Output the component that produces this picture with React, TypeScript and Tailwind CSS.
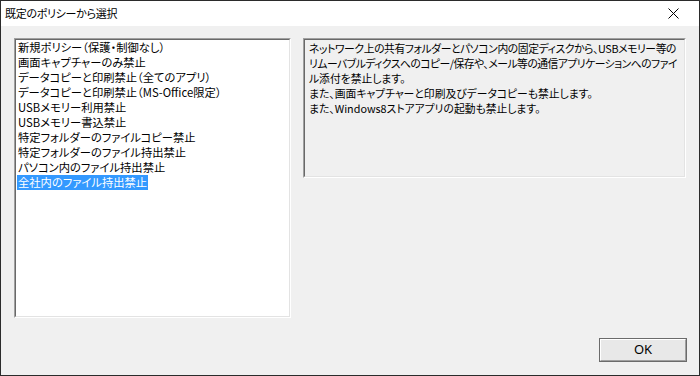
import React from "react";

const items = [
  "新規ポリシー（保護・制御なし）",
  "画面キャプチャーのみ禁止",
  "データコピーと印刷禁止（全てのアプリ）",
  "データコピーと印刷禁止（MS-Office限定）",
  "USBメモリー利用禁止",
  "USBメモリー書込禁止",
  "特定フォルダーのファイルコピー禁止",
  "特定フォルダーのファイル持出禁止",
  "パソコン内のファイル持出禁止",
  "全社内のファイル持出禁止",
];

const desc = [
  { t: "ネットワーク上の共有フォルダーとパソコン内の固定ディスクから、USBメモリー等の", c: "tracking-[-0.4px]" },
  { t: "リムーバブルディクスへのコピー/保存や、メール等の通信アプリケーションへのファイ", c: "tracking-[-0.5px]" },
  { t: "ル添付を禁止します。", c: "" },
  { t: "また、画面キャプチャーと印刷及びデータコピーも禁止します。", c: "" },
  { t: "また、Windows8ストアアプリの起動も禁止します。", c: "" },
];

export default function App() {
  return (
    <div className="w-[700px] h-[376px] box-border border border-[#2b2b2b] bg-[#f0f0f0] flex flex-col text-black font-['Noto_Sans_CJK_JP','Noto_Sans',sans-serif] [font-feature-settings:'palt'] overflow-hidden">
      {/* title bar */}
      <div className="h-[25px] shrink-0 bg-white flex items-center justify-between pl-[4px] pr-[20px]">
        <span className="text-[11px] tracking-[-0.3px] leading-[15px]">既定のポリシーから選択</span>
        <svg width="11" height="11" viewBox="0 0 11 11" className="text-black">
          <path d="M0.5 0.5 L10.5 10.5 M10.5 0.5 L0.5 10.5" stroke="currentColor" strokeWidth="1" fill="none" />
        </svg>
      </div>

      {/* client */}
      <div className="flex-1 flex flex-col pl-[13px] pr-[12px] pt-[12px]">
        <div className="flex gap-[12px] items-start">
          {/* list box */}
          <div className="w-[277px] h-[280px] border border-t-[#a0a0a0] border-l-[#a0a0a0] border-r-white border-b-white">
            <div className="w-full h-full bg-white border border-t-[#696969] border-l-[#696969] border-r-[#e3e3e3] border-b-[#e3e3e3] px-[1px] overflow-hidden">
              {items.map((t, i) => (
                <div key={i} className="h-[15px] leading-[15px] text-[11.3px] whitespace-nowrap">
                  <span
                    className={
                      i === items.length - 1
                        ? "inline-block bg-[#3399ff] text-white px-[1px]"
                        : "inline-block px-[1px]"
                    }
                  >
                    {t}
                  </span>
                </div>
              ))}
            </div>
          </div>

          {/* description */}
          <div className="w-[383px] h-[140px] border border-t-[#a0a0a0] border-l-[#a0a0a0] border-r-white border-b-white">
            <div className="w-full h-full border border-t-[#696969] border-l-[#696969] border-r-[#e3e3e3] border-b-[#e3e3e3] pl-[4px] pt-[1px] overflow-hidden">
              {desc.map((d, i) => (
                <div key={i} className={"h-[15px] leading-[15px] text-[10.8px] whitespace-nowrap " + d.c}>
                  {d.t}
                </div>
              ))}
            </div>
          </div>
        </div>

        <div className="flex justify-end mt-[20px]">
          <button className="w-[88px] h-[24px] border border-[#6b6b6b] bg-[#e8e8e8] p-0">
            <div className="w-full h-full border border-t-white border-l-white border-r-[#a0a0a0] border-b-[#a0a0a0] flex items-center justify-center text-[13px] font-['Noto_Sans','Liberation_Sans',sans-serif]">
              OK
            </div>
          </button>
        </div>
      </div>
    </div>
  );
}
